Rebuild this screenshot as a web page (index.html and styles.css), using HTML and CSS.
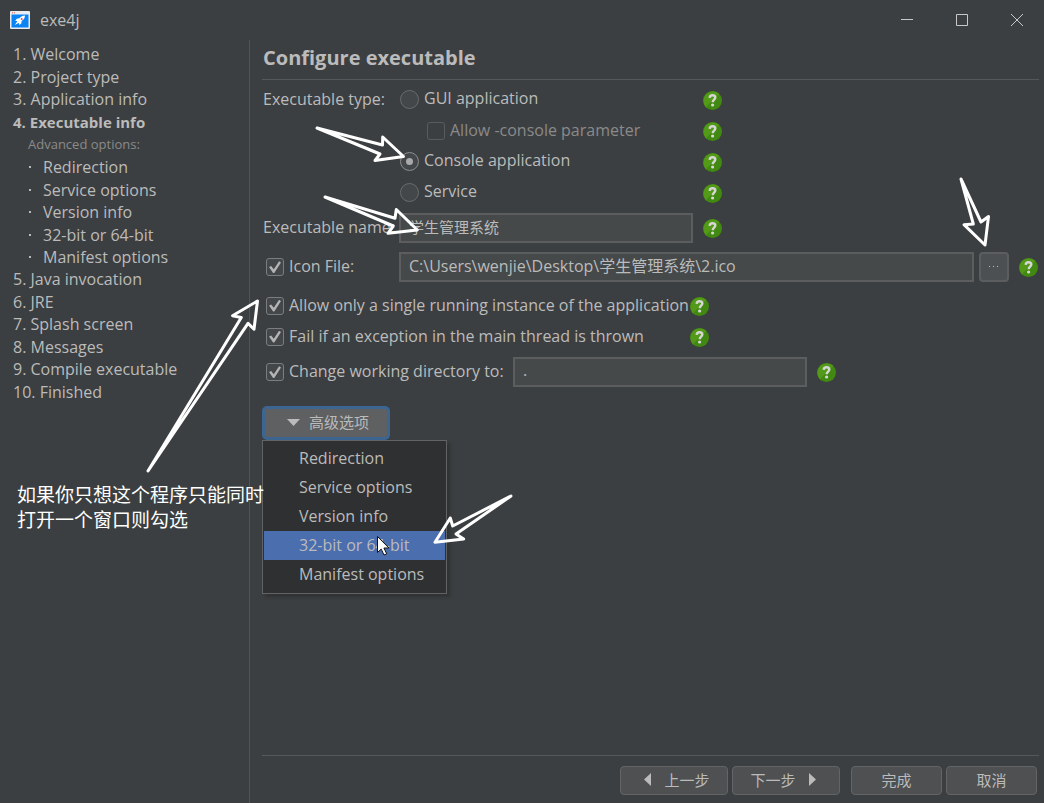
FILE: index.html
```html
<!DOCTYPE html>
<html lang="zh-CN">
<head>
<meta charset="utf-8">
<title>exe4j</title>
<link rel="stylesheet" href="styles.css">
</head>
<body>
<svg class="defs" aria-hidden="true">
  <symbol id="help" viewBox="0 0 19 19">
    <circle cx="9.5" cy="9.5" r="9.5" fill="#418911"/>
    <path d="M2.8 16.2A9.5 9.5 0 0 1 16.2 2.8Z" fill="#549a19"/>
    <path d="M6.7 6.900C6.800 5.200 7.800 4.300 9.500 4.300c1.800 0 2.800.9 2.800 2.300 0 2-2.600 2.100-2.600 4.600" fill="none" stroke="#d6d6d6" stroke-width="2.400"/>
    <circle cx="9.600" cy="14" r="1.600" fill="#d6d6d6"/>
  </symbol>
</svg>
<div class="window">
  <header class="titlebar">
    <svg class="logo" width="20" height="18" viewBox="0 0 20 18" aria-hidden="true">
      <rect width="20" height="18" rx="1" fill="#e9edf0"/>
      <rect x="1.500" y="3.500" width="17" height="13" fill="#0a84f5"/>
      <circle cx="2.500" cy="1.800" r=".6" fill="#e0533d"/><circle cx="4.500" cy="1.800" r=".6" fill="#e0533d"/>
      <path d="M15 4.500c-2.500.2-4.300 1-5.700 2.800L6.800 7.800 5.200 10l2.200.1-.7 1.200-2 2.700 2.900-1.500 1.400-.6.3 2.200 2-1.700.4-2.300C13.600 8.700 15 7 15 4.500Z" fill="#fff"/>
      <circle cx="11.700" cy="8" r="1" fill="#e0533d"/>
    </svg>
    <span class="app-name">exe4j</span>
    <div class="controls">
      <button type="button" aria-label="Minimize"><svg width="12" height="12"><path d="M0 5.500h12"/></svg></button>
      <button type="button" aria-label="Maximize"><svg width="12" height="12"><path d="M.5.5h11v11H.5z"/></svg></button>
      <button type="button" aria-label="Close"><svg width="12" height="12"><path d="M0 0l12 12M12 0L0 12"/></svg></button>
    </div>
  </header>
  <div class="body">
    <nav class="sidebar">
      <ul class="steps">
        <li>1. Welcome</li>
        <li>2. Project type</li>
        <li>3. Application info</li>
        <li class="current">4. Executable info</li>
        <li class="caption">Advanced options:</li>
        <li class="sub">Redirection</li>
        <li class="sub">Service options</li>
        <li class="sub">Version info</li>
        <li class="sub">32-bit or 64-bit</li>
        <li class="sub">Manifest options</li>
        <li>5. Java invocation</li>
        <li>6. JRE</li>
        <li>7. Splash screen</li>
        <li>8. Messages</li>
        <li>9. Compile executable</li>
        <li>10. Finished</li>
      </ul>
    </nav>
    <main class="main">
      <h1>Configure executable</h1>
      <form class="form">
        <div class="types">
          <span class="types-label">Executable type:</span>
          <label class="option"><input type="radio" name="type">GUI application</label>
          <button type="button" class="help" aria-label="Help"><svg><use href="#help"/></svg></button>
          <label class="option nested"><input type="checkbox" disabled>Allow -console parameter</label>
          <button type="button" class="help" aria-label="Help"><svg><use href="#help"/></svg></button>
          <label class="option"><input type="radio" name="type" checked>Console application</label>
          <button type="button" class="help" aria-label="Help"><svg><use href="#help"/></svg></button>
          <label class="option"><input type="radio" name="type">Service</label>
          <button type="button" class="help" aria-label="Help"><svg><use href="#help"/></svg></button>
        </div>
        <div class="row field">
          <label class="name plain" for="exe-name">Executable name:</label>
          <input class="text medium cjk" id="exe-name" type="text" value="学生管理系统">
          <button type="button" class="help" aria-label="Help"><svg><use href="#help"/></svg></button>
        </div>
        <div class="row field icon-file">
          <label class="name check"><input type="checkbox" checked>Icon File:</label>
          <input class="text wide" type="text" aria-label="Icon File" value="C:\Users\wenjie\Desktop\学生管理系统\2.ico">
          <button type="button" class="browse" aria-label="Browse"><svg width="12" height="4"><path d="M1 1h1v1H1zM5 1h1v1H5zM9 1h1v1H9z"/></svg></button>
          <button type="button" class="help" aria-label="Help"><svg><use href="#help"/></svg></button>
        </div>
        <div class="row flag">
          <label class="check"><input type="checkbox" checked>Allow only a single running instance of the application</label>
          <button type="button" class="help" aria-label="Help"><svg><use href="#help"/></svg></button>
        </div>
        <div class="row flag">
          <label class="check"><input type="checkbox" checked>Fail if an exception in the main thread is thrown</label>
          <button type="button" class="help" aria-label="Help"><svg><use href="#help"/></svg></button>
        </div>
        <div class="row directory">
          <label class="check"><input type="checkbox" checked>Change working directory to:</label>
          <input class="text medium" type="text" aria-label="Working directory" value=".">
          <button type="button" class="help" aria-label="Help"><svg><use href="#help"/></svg></button>
        </div>
        <div class="dropdown">
          <button type="button" class="advanced cjk" aria-haspopup="true"><svg width="13" height="7"><path d="M0 0h13L6.500 7z"/></svg>高级选项</button>
          <div class="menu" role="menu">
            <button type="button" role="menuitem">Redirection</button>
            <button type="button" role="menuitem">Service options</button>
            <button type="button" role="menuitem">Version info</button>
            <button type="button" role="menuitem" class="active">32-bit or 64-bit</button>
            <button type="button" role="menuitem">Manifest options</button>
          </div>
        </div>
      </form>
      <footer class="footer cjk">
        <button type="button" class="step back"><svg width="7" height="13"><path d="M7 0v13L0 6.500z"/></svg>上一步</button>
        <button type="button" class="step next">下一步<svg width="7" height="13"><path d="M0 0v13l7-6.500z"/></svg></button>
        <button type="button" class="end finish">完成</button>
        <button type="button" class="end">取消</button>
      </footer>
    </main>
  </div>
  <p class="note">如果你只想这个程序只能同时<br>打开一个窗口则勾选</p>
  <svg class="arrows" width="1044" height="803" aria-hidden="true">
    <path d="M317 128L382.500 145 382.700 137 403.500 156.500 375 160.500 380 154Z"/>
    <path d="M325 197L395 218.300 396.300 209.500 417.300 230 388 233.300 393.300 226Z"/>
    <path d="M961 179L981 222 988.500 216.500 985 245 964 224.700 973.300 224Z"/>
    <path d="M148 471L241.300 317.500 232.500 315.700 257.500 301 254 329.300 248 323.300Z"/>
    <path d="M511 496L452.700 526 450.300 518 435 542.300 463.700 539 456 534Z"/>
    <path class="pointer" d="M377.500 536.500v16l3.700-3.400 2.800 5.900 2.700-1.200-2.800-5.800h5z"/>
  </svg>
</div>
</body>
</html>
```
FILE: styles.css
```css
* { box-sizing: border-box; }

body {
  margin: 0;
  background: #3c3f41;
  color: #bbbbbb;
  font: 16px/22px "Open Sans", "Noto Sans CJK SC", sans-serif;
}

button, input { font: inherit; color: inherit; margin: 0; }
button { padding: 0; border: 0; background: none; }
svg { fill: #bbbbbb; }
.defs { display: none; }

.window {
  position: relative;
  display: flex;
  flex-direction: column;
  min-height: 100vh;
}

.titlebar {
  display: flex;
  align-items: center;
  height: 40px;
  padding-left: 10px;
}
.app-name { margin-left: 10px; }
.controls { display: flex; margin-left: auto; }
.controls button { display: grid; place-items: center; width: 55px; height: 40px; }
.controls svg { fill: none; stroke: #c8c8c8; }

.body { display: flex; flex: 1; }

.sidebar {
  flex: none;
  width: 250px;
  padding: 3px 0 0 13px;
  border-right: 1px solid #515355;
}
.steps { margin: 0; padding: 0; list-style: none; }
.steps li { height: 22px; line-height: 22px; }
.steps li:nth-child(odd) { height: 23px; }
.steps .current { font-size: 15px; font-weight: 700; }
.steps .caption { padding-left: 15px; font-size: 13px; color: #8a8a8a; }
.steps .sub { display: flex; align-items: center; padding-left: 16px; }
.steps .sub::before { content: ""; width: 2px; height: 2px; margin-right: 12px; background: #bbbbbb; }

.main {
  display: flex;
  flex: 1;
  flex-direction: column;
  min-width: 0;
  padding: 0 5px 8px 12px;
}
h1 {
  height: 40px;
  margin: 0 0 4px;
  padding-left: 1px;
  border-bottom: 1px solid #555759;
  font-size: 20px;
  line-height: 35px;
}

.types {
  display: grid;
  grid-template-columns: 138px 303px auto;
  grid-auto-rows: 31px;
  align-items: center;
  justify-content: start;
  margin-bottom: 5px;
}
.types-label { padding: 0 0 2px 1px; }
.option, .check { display: flex; align-items: flex-start; gap: 5px; line-height: 17px; }
.option { grid-column: 2; }
.nested { padding-left: 27px; color: #8a8a8a; }

input[type="radio"], input[type="checkbox"] {
  appearance: none;
  flex: none;
  display: grid;
  place-items: center;
  width: 18px;
  height: 18px;
  border: 1px solid #7b7d7e;
  border-radius: 3px;
  background: #43474a;
}
input[type="radio"] { width: 19px; height: 19px; border-color: #696b6d; border-radius: 50%; }
input[type="radio"]:checked { border-color: #8c8e8f; }
input[type="radio"]:checked::before { content: ""; width: 7px; height: 7px; border-radius: 50%; background: #a9a9a9; }
input[type="checkbox"]:disabled { border-color: #595b5d; background: none; }
input[type="checkbox"]:checked::before {
  content: "";
  width: 12px;
  height: 12px;
  background: #b4b4b4;
  clip-path: polygon(0 50%, 18% 42%, 40% 68%, 84% 2%, 100% 12%, 44% 100%, 34% 100%);
}

.help { display: block; flex: none; width: 19px; height: 19px; margin-top: 1px; }
.help svg { display: block; width: 19px; height: 19px; }

.row { display: flex; align-items: center; }
.check { padding-left: 4px; }
.field { margin-bottom: 9px; padding-right: 1px; }
.icon-file { margin-bottom: 8px; }
.name { flex: none; width: 137px; }
.plain { padding: 0 0 2px 1px; }
.text {
  height: 30px;
  padding: 0 8px 4px;
  border: 2px solid #5b5d5f;
  border-radius: 0;
  background: #45494a;
}
.cjk { font-size: 15px; }
.medium { width: 294px; margin-right: 10px; }
.wide { flex: 1; min-width: 0; margin-right: 5px; }
.browse {
  display: grid;
  place-items: center;
  width: 30px;
  height: 30px;
  margin-right: 10px;
  border: 2px solid #5b5d5f;
  border-radius: 4px;
  background: #4c5052;
}
.flag { height: 31px; }
.flag .check { width: 428px; }
.directory { margin: 5px 0 19px; }
.directory .check { width: 251px; }

.dropdown { position: relative; width: 128px; }
.advanced {
  display: flex;
  align-items: center;
  justify-content: center;
  gap: 9px;
  width: 128px;
  height: 34px;
  padding: 0 0 2px 4px;
  border: 3px solid #3d6591;
  border-radius: 5px;
  background: #5e6062;
}
.menu {
  position: absolute;
  top: 34px;
  left: 0;
  display: flex;
  flex-direction: column;
  width: 185px;
  padding: 3px 1px 4px;
  border: 1px solid #616365;
  background: #2f3032;
  box-shadow: 3px 3px 3px #303234;
}
.menu button { height: 29px; padding: 0 0 2px 35px; text-align: left; }
.menu .active { background: #4b6eaf; }

.footer {
  display: flex;
  justify-content: flex-end;
  gap: 4px;
  margin-top: auto;
  padding: 10px 2px 0 0;
  border-top: 1px solid #555759;
}
.footer button {
  display: flex;
  align-items: center;
  justify-content: center;
  gap: 13px;
  height: 29px;
  padding-bottom: 2px;
  border: 1px solid #626466;
  border-radius: 4px;
  background: #4e5052;
}
.footer .step { width: 108px; }
.footer .back { padding-left: 6px; }
.footer .next { padding-right: 6px; }
.footer .end { width: 91px; }
.footer .finish { margin-left: 7px; }

.note {
  position: absolute;
  top: 483px;
  left: 17px;
  margin: 0;
  color: #ffffff;
  font-size: 19px;
  line-height: 25px;
  white-space: nowrap;
}
.arrows {
  position: absolute;
  top: 0;
  left: 0;
  fill: none;
  stroke: #ffffff;
  stroke-width: 3;
  stroke-linejoin: round;
  pointer-events: none;
}
.pointer { fill: #ffffff; stroke: #111111; stroke-width: 1; }
```
